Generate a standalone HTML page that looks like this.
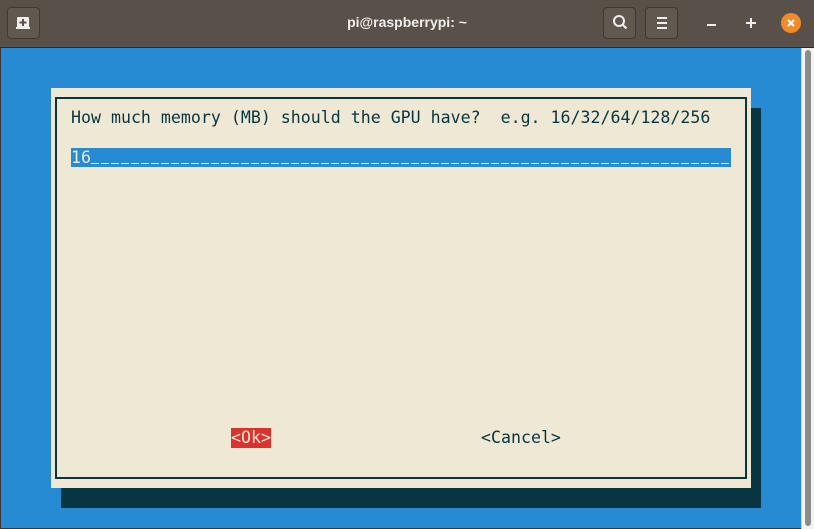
<!DOCTYPE html>
<html><head><style>
body{margin:0;width:814px;height:529px;overflow:hidden;background:#3c3835;position:relative;font-family:"DejaVu Sans Mono","Liberation Mono",monospace}
.tb{position:absolute;left:0;top:0;width:814px;height:47px;background:#595049;border-bottom:1px solid #2e2a27}
.btn{position:absolute;top:7px;width:33px;height:32px;border:1px solid #3f3934;border-radius:4px;background:#615850;box-sizing:border-box}
.title{position:absolute;left:0;width:814px;top:14px;text-align:center;color:#f0eeec;font:bold 14px "Liberation Sans",sans-serif}
.term{position:absolute;left:1px;top:48px;width:800px;height:480px;background:#268bd2}
.sb{position:absolute;left:801px;top:48px;width:13px;height:481px;background:#f4f3f1;border-left:1px solid #ccc;box-sizing:border-box}
.thumb{position:absolute;left:3px;top:2px;width:6px;height:476px;background:#8c8c8c;border-radius:3px}
.abs{position:absolute}
.t{position:absolute;font-size:16.6px;line-height:20px;color:#073642;white-space:pre}
</style></head><body>
<div class="tb">
 <div class="btn" style="left:7px"><svg width="31" height="30"><rect x="9" y="9" width="12" height="11" fill="#eee" rx="1"/><path d="M15 11v7M11.5 14.5h7" stroke="#595049" stroke-width="2"/><rect x="8" y="19" width="14" height="2" fill="#eee"/></svg></div>
 <div class="title">pi@raspberrypi: ~</div>
 <div class="btn" style="left:603px"><svg width="33" height="30"><circle cx="15" cy="13" r="5" stroke="#eee" stroke-width="2" fill="none"/><path d="M18.5 16.5l4 4" stroke="#eee" stroke-width="2"/></svg></div>
 <div class="btn" style="left:645px"><svg width="33" height="30"><path d="M11 10h10M11 15h10M11 20h10" stroke="#eee" stroke-width="2"/></svg></div>
 <div class="abs" style="left:707px;top:24px;width:9px;height:2px;background:#eee"></div>
 <div class="abs" style="left:746px;top:22px;width:10px;height:2px;background:#eee"></div>
 <div class="abs" style="left:750px;top:18px;width:2px;height:10px;background:#eee"></div>
 <div class="abs" style="left:781px;top:13px;width:20px;height:20px;border-radius:50%;background:#f18b2a"><svg width="20" height="20"><path d="M7 7l6 6M13 7l-6 6" stroke="#fff" stroke-width="2"/></svg></div>
</div>
<div class="term"></div>
<div class="sb"><div class="thumb"></div></div>
<div class="abs" style="left:61px;top:108px;width:700px;height:400px;background:#073642"></div>
<div class="abs" style="left:51px;top:88px;width:700px;height:400px;background:#eee8d5"></div>
<div class="abs" style="left:55px;top:97px;width:692px;height:382px;border:2px solid #073642;box-sizing:border-box"></div>
<div class="t" style="left:71px;top:108px">How much memory (MB) should the GPU have?  e.g. 16/32/64/128/256</div>
<div class="abs" style="left:71px;top:148px;width:660px;height:19px;background:#268bd2"></div>
<div class="abs" style="left:91px;top:163px;width:640px;height:1px;background:repeating-linear-gradient(90deg,#eee8d5 0 8px,transparent 8px 10px)"></div>
<div class="t" style="left:71px;top:148px;color:#eee8d5">16</div>
<div class="abs" style="left:231px;top:428px;width:40px;height:20px;background:#dc322f"></div>
<div class="t" style="left:231px;top:428px;color:#eee8d5">&lt;Ok&gt;</div>
<div class="t" style="left:481px;top:428px">&lt;Cancel&gt;</div>
</body></html>
